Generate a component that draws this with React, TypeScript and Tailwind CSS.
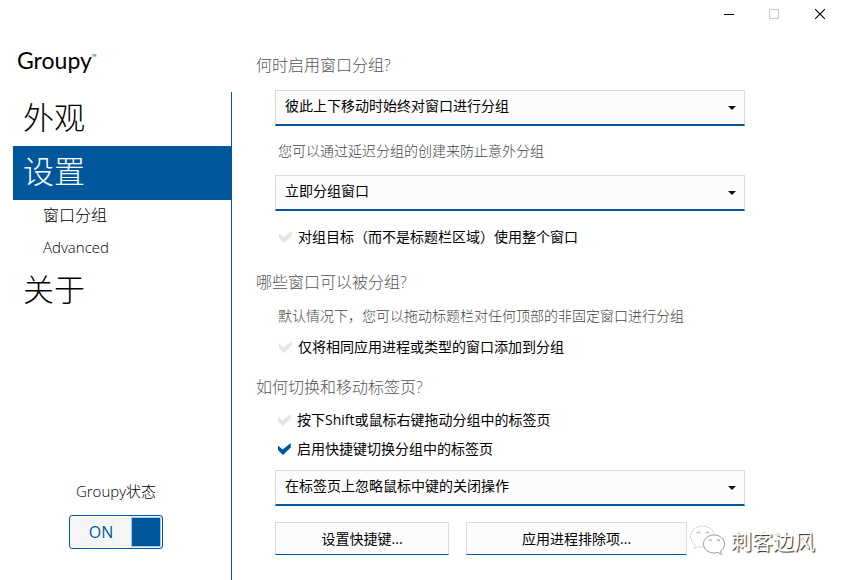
import { useState } from "react";

const whenOptions = ["彼此上下移动时始终对窗口进行分组", "从不自动分组"];
const delayOptions = ["立即分组窗口", "延迟后分组窗口"];
const middleClickOptions = ["在标签页上忽略鼠标中键的关闭操作", "鼠标中键关闭标签页"];

const TitleBar = () => {
  return (
    <header className="flex h-7 justify-end">
      <button aria-label="Minimize" className="flex w-[42px] items-center justify-center">
        <svg className="size-[10px]" viewBox="0 0 10 10" shapeRendering="crispEdges">
          <path d="M0 5h10v1H0z" fill="#000" />
        </svg>
      </button>
      <button aria-label="Maximize" disabled className="flex w-12 items-center justify-center">
        <svg className="size-[10px]" viewBox="0 0 10 10">
          <path d="M.5.5h9v9h-9z" fill="none" stroke="#c8c8c8" />
        </svg>
      </button>
      <button aria-label="Close" className="flex w-11 items-center justify-center">
        <svg className="size-[10px]" viewBox="0 0 10 10">
          <path d="M0 0l10 10M10 0L0 10" fill="none" stroke="#000" strokeWidth="1.1" />
        </svg>
      </button>
    </header>
  );
};

const Dropdown = ({ label, options }: { label: string; options: string[] }) => {
  return (
    <div className="grid h-9 items-center">
      <select
        aria-label={label}
        className="h-full w-full appearance-none border border-b-2 border-[#dcdcdc] border-b-[#00579c] bg-[#fcfcfc] pb-1 pl-[9px] text-sm text-black outline-none [grid-area:1/1]"
      >
        {options.map((option) => (
          <option key={option}>{option}</option>
        ))}
      </select>
      <svg
        className="pointer-events-none mr-[9px] h-1 w-2 justify-self-end [grid-area:1/1]"
        viewBox="0 0 8 4"
      >
        <path d="M0 0h8L4 4z" fill="#111" />
      </svg>
    </div>
  );
};

const Check = ({ label, defaultChecked = false }: { label: string; defaultChecked?: boolean }) => {
  return (
    <label className="flex h-5 items-center gap-[6px] text-sm leading-5 text-black">
      <span className="grid size-[14px] place-items-center">
        <input
          type="checkbox"
          defaultChecked={defaultChecked}
          className="peer size-[14px] appearance-none outline-none [grid-area:1/1]"
        />
        <svg
          className="pointer-events-none h-3 w-[13px] text-[#e4e4e4] [grid-area:1/1] peer-checked:text-[#00579c]"
          viewBox="0 0 13 12"
        >
          <path d="M0 2.500L4.500 6.500 12.800 0v4.500L5 12 0 7z" fill="currentColor" />
        </svg>
      </span>
      {label}
    </label>
  );
};

const Sidebar = () => {
  const [on, setOn] = useState(true);

  return (
    <aside className="flex w-[232px] flex-col">
      <div className="h-16 pl-[17px] pt-4 font-[Lato,sans-serif] text-[23px] leading-8 text-black">
        <span className="flex items-start">
          Groupy<span className="pt-2 text-[3px] leading-[8px]">TM</span>
        </span>
      </div>
      <div className="flex flex-1 flex-col justify-between border-r border-[#00579c] pl-[13px]">
        <nav className="flex flex-col font-light text-black">
          <a
            href="#look"
            className="flex h-[54px] items-center pb-1 pl-[10px] text-[31px] font-extralight leading-10"
          >
            外观
          </a>
          <a
            href="#settings"
            className="flex h-[54px] items-center bg-[#00579c] pb-1 pl-[10px] text-[31px] font-extralight leading-10 text-white"
          >
            设置
          </a>
          <a href="#grouping" className="flex h-8 items-center pb-[2px] pl-[30px] text-base">
            窗口分组
          </a>
          <a href="#advanced" className="flex h-8 items-center pb-[2px] pl-[30px] text-[15px]">
            Advanced
          </a>
          <a
            href="#about"
            className="flex h-[54px] items-center pb-1 pl-[10px] text-[31px] font-extralight leading-10"
          >
            关于
          </a>
        </nav>
        <div className="flex w-[206px] flex-col items-center gap-3 pb-[31px]">
          <span id="status" className="text-[15px] font-light leading-6 text-black">
            Groupy状态
          </span>
          <button
            role="switch"
            aria-checked={on}
            aria-labelledby="status"
            onClick={() => setOn(!on)}
            className="flex h-[34px] w-[94px] items-center rounded-[3px] border border-[#00579c] bg-[#f5f5f5] p-px text-base text-[#00579c]"
          >
            <span className="flex-1">{on ? "ON" : "OFF"}</span>
            <span className="h-full w-[30px] border border-[#a9c6de] bg-[#00579c]" />
          </button>
        </div>
      </div>
    </aside>
  );
};

const Watermark = () => {
  return (
    <div className="pointer-events-none absolute bottom-6 right-[27px] flex items-center gap-[6px]">
      <svg className="h-[31px] w-[35px]" viewBox="0 0 35 31" fill="none" stroke="#999">
        <path
          d="M12.500 22c-2 0-3-.3-4-.6L4 23.500l1-4C2 17.500.5 14.500.5 11.500.5 5.500 6 1 12.500 1 18 1 23 4.500 24 9"
          stroke="#c4c4c4"
          strokeDasharray="2 1"
        />
        <path
          d="M24 10c6 0 10.500 4 10.500 9 0 3-1.500 5.500-4 7l1 3.500-3.500-2c-1 .3-2.500.5-4 .5-6 0-10.500-4-10.500-9s4.500-9 10.500-9z"
          fill="#fff"
        />
        <path d="M7 8.500a1.500 1.500 0 0 1 3 0M16 8.500a1.500 1.500 0 0 1 3 0M19 16a1.300 1.300 0 0 1 2.600 0M27 16a1.300 1.300 0 0 1 2.600 0" />
      </svg>
      <span className="text-[21px] leading-7 text-white [text-shadow:1px_1px_1px_#222]">
        刺客边风
      </span>
    </div>
  );
};

const App = () => {
  return (
    <div
      lang="zh-CN"
      className="relative flex min-h-screen flex-col bg-white font-['Open_Sans','Noto_Sans_CJK_SC',sans-serif]"
    >
      <TitleBar />
      <div className="flex flex-1">
        <Sidebar />
        <main className="flex-1 pb-6 pl-6 pr-[97px] pt-[25px]">
          <section>
            <h2 className="text-base font-light leading-6 text-[#555]">何时启用窗口分组?</h2>
            <div className="flex flex-col pl-[19px] pt-[13px]">
              <Dropdown label="何时启用窗口分组" options={whenOptions} />
              <p className="pb-[14px] pl-[3px] pt-[15px] text-sm font-light leading-5 text-[#444]">
                您可以通过延迟分组的创建来防止意外分组
              </p>
              <Dropdown label="延迟分组" options={delayOptions} />
              <div className="pl-[3px] pt-4">
                <Check label="对组目标（而不是标题栏区域）使用整个窗口" />
              </div>
            </div>
          </section>

          <section className="pt-[23px]">
            <h2 className="text-base font-light leading-6 text-[#555]">哪些窗口可以被分组?</h2>
            <div className="flex flex-col gap-[11px] pl-[22px] pt-3">
              <p className="text-sm font-light leading-5 text-[#444]">
                默认情况下，您可以拖动标题栏对任何顶部的非固定窗口进行分组
              </p>
              <Check label="仅将相同应用进程或类型的窗口添加到分组" />
            </div>
          </section>

          <section className="pt-[18px]">
            <h2 className="text-base font-light leading-6 text-[#555]">如何切换和移动标签页?</h2>
            <div className="flex flex-col pl-[19px] pt-[11px]">
              <div className="flex flex-col gap-[9px] pb-[11px] pl-[2px]">
                <Check label="按下Shift或鼠标右键拖动分组中的标签页" />
                <Check label="启用快捷键切换分组中的标签页" defaultChecked />
              </div>
              <Dropdown label="鼠标中键" options={middleClickOptions} />
              <div className="flex gap-[17px] pr-[58px] pt-4 text-sm text-black">
                <button className="h-[33px] flex-[174] border border-[#dcdcdc] border-b-[#00579c] bg-[#fcfcfc]">
                  设置快捷键...
                </button>
                <button className="h-[33px] flex-[221] border border-[#dcdcdc] border-b-[#00579c] bg-[#fcfcfc]">
                  应用进程排除项...
                </button>
              </div>
            </div>
          </section>
        </main>
      </div>
      <Watermark />
    </div>
  );
};

export default App;
